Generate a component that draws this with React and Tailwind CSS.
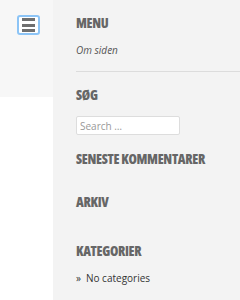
export default function App() {
  const heading = "text-[13.5px] leading-[16px] font-extrabold font-stretch-condensed tracking-[-0.3px] text-[#666] uppercase";
  return (
    <div className="flex min-h-[300px] w-[240px] font-['Open_Sans',sans-serif]">
      {/* left strip with menu toggle */}
      <div className="w-[53px] shrink-0 bg-white">
        <div className="h-[97px] bg-[#f7f7f7] pl-[17px] pt-[15px]">
          <button className="flex h-[20px] w-[23px] flex-col justify-between rounded-[3px] border-2 border-[#8cc4f6] bg-white px-[3px] py-[1px]">
            <span className="block h-[3px] w-full bg-[#6f6f6f]" />
            <span className="block h-[3px] w-full bg-[#6f6f6f]" />
            <span className="block h-[3px] w-full bg-[#6f6f6f]" />
          </button>
        </div>
      </div>

      {/* sidebar widgets */}
      <div className="flex-1 bg-[#f3f3f3] pl-[23px] pt-[15px]">
        <h2 className={heading}>Menu</h2>
        <p className="mt-[12px] text-[10px] leading-[14px] italic text-[#555]">Om siden</p>
        <div className="mt-[14px] h-px bg-[#dcdcdc]" />

        <h2 className={`${heading} mt-[15px]`}>Søg</h2>
        <input
          type="search"
          placeholder="Search …"
          className="mt-[13px] block h-[19px] w-[104px] rounded-[2px] border border-[#ddd] bg-white px-[3px] text-[10px] text-[#333] placeholder:text-[#999] outline-none"
        />

        <h2 className={`${heading} mt-[16px]`}>Seneste kommentarer</h2>
        <h2 className={`${heading} mt-[27px]`}>Arkiv</h2>
        <h2 className={`${heading} mt-[33px]`}>Kategorier</h2>
        <ul className="mt-[12px] text-[10px] leading-[14px] text-[#333]">
          <li>
            <span className="mr-[5px]">»</span>No categories
          </li>
        </ul>
      </div>
    </div>
  );
}
